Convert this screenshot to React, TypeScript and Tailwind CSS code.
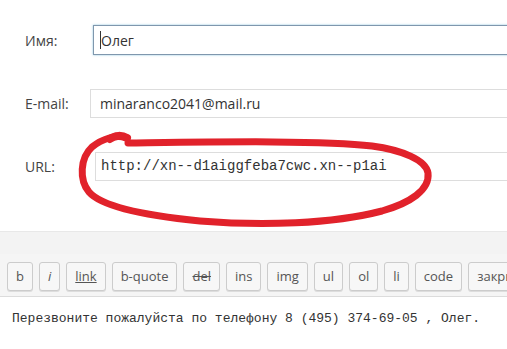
import React from "react";

const buttons = [
  { label: "b", cls: "" },
  { label: "i", cls: "italic" },
  { label: "link", cls: "underline" },
  { label: "b-quote", cls: "" },
  { label: "del", cls: "line-through" },
  { label: "ins", cls: "" },
  { label: "img", cls: "" },
  { label: "ul", cls: "" },
  { label: "ol", cls: "" },
  { label: "li", cls: "" },
  { label: "code", cls: "" },
  { label: "закрыть теги", cls: "" },
];

// Hand-drawn red circle over the URL field
function RedMark() {
  return (
    <svg
      className="absolute left-0 top-0 pointer-events-none"
      width="507"
      height="349"
      viewBox="0 0 507 349"
    >
      <path
        d="M 127 138 C 116 134 102 139 92 147 C 80 158 79 180 89 192 C 101 206 140 215 200 221 C 262 226 332 224 382 211 C 410 203 430 190 428 173 C 426 160 402 150 372 146 C 322 140 210 142 128 143"
        fill="none"
        stroke="#e1222b"
        strokeWidth="7"
        strokeLinecap="round"
        strokeLinejoin="round"
      />
      <path
        d="M 110 139 C 115 135 122 135 127 138"
        fill="none"
        stroke="#e1222b"
        strokeWidth="8"
        strokeLinecap="round"
      />
    </svg>
  );
}

export default function App() {
  return (
    <div className="relative w-[507px] h-[349px] overflow-hidden bg-white font-['Open_Sans',sans-serif] text-[#333]">
      {/* Form fields */}
      <div className="flex flex-col gap-[34px] pt-[25px]">
        <div className="flex items-center h-[30px]">
          <label className="shrink-0 w-[93px] pl-[25px] text-[14px] text-[#444]">Имя:</label>
          <div className="shrink-0 flex items-center w-[440px] h-[30px] border border-[#7f97ad] shadow-[0_0_2px_rgba(30,140,190,0.5)] pl-[6px] text-[14px]">
            <span className="w-px h-[18px] bg-[#333]" />
            <span>Олег</span>
          </div>
        </div>

        <div className="flex items-center h-[29px]">
          <label className="shrink-0 w-[90px] pl-[25px] text-[14px] text-[#444]">E-mail:</label>
          <div className="shrink-0 flex items-center w-[440px] h-[29px] border border-[#ddd] pl-[9px] text-[14px]">
            minaranco2041@mail.ru
          </div>
        </div>

        <div className="flex items-center h-[29px]">
          <label className="shrink-0 w-[95px] pl-[25px] text-[14px] text-[#444]">URL:</label>
          <div className="shrink-0 flex items-center w-[440px] h-[29px] border border-[#ddd] pl-[5px] text-[14px] font-['Liberation_Mono',monospace]">
            http://xn--d1aiggfeba7cwc.xn--p1ai
          </div>
        </div>
      </div>

      {/* Editor */}
      <div className="mt-[50px]">
        <div className="h-[23px] bg-[#f3f3f3] border-t border-[#e8e8e8]" />
        <div className="flex gap-[6px] pl-[7px] pt-[8px] pb-[5px] bg-[#f5f5f5] border-b border-[#dcdcdc] whitespace-nowrap">
          {buttons.map((b) => (
            <button
              key={b.label}
              className="h-[29px] px-[8px] shrink-0 border border-[#ccc] rounded-[3px] bg-[#f7f7f7] text-[13px] text-[#555] shadow-[0_1px_0_#ddd]"
            >
              <span className={b.cls}>{b.label}</span>
            </button>
          ))}
        </div>
        <div className="pl-[12px] pt-[12px] text-[13px] text-[#333] font-['Liberation_Mono',monospace] whitespace-pre">
          Перезвоните пожалуйста по телефону 8 (495) 374-69-05 , Олег.
        </div>
      </div>

      <RedMark />
    </div>
  );
}
